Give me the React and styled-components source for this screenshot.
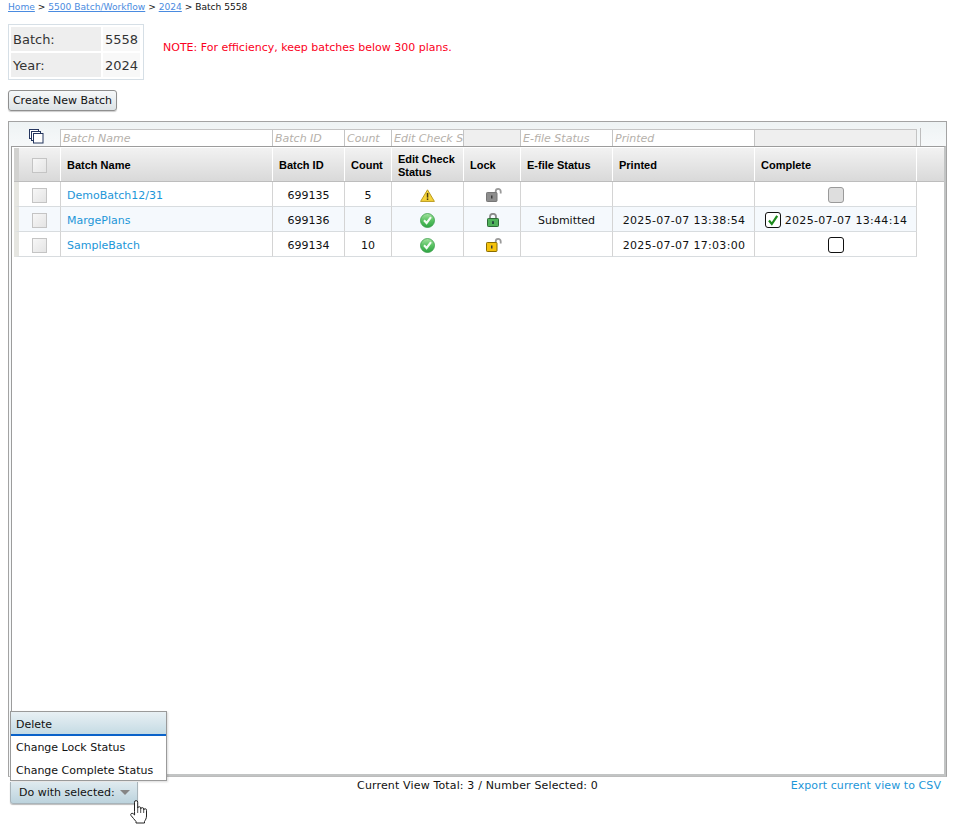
import React from 'react';
import styled, { createGlobalStyle } from 'styled-components';

const Global = createGlobalStyle`
  html, body { margin: 0; padding: 0; background: #fff; }
  body { font-family: "DejaVu Sans", Verdana, sans-serif; font-size: 11px; color: #222; }
`;

const COLS = '47px 212px 72px 47px 72px 57px 92px 142px 162px';

const Page = styled.div`
  width: 955px;
  height: 826px;
  padding: 0 8px;
  box-sizing: border-box;
  overflow: hidden;
`;

const Crumbs = styled.div`
  height: 24px;
  padding-top: 2px;
  box-sizing: border-box;
  font-size: 9.1px;
  line-height: 11px;
  color: #111;
  a { color: #4a8be0; text-decoration: underline; }
`;

const Top = styled.div`
  display: flex;
  align-items: flex-start;
`;

const InfoBox = styled.div`
  width: 136px;
  height: 56px;
  box-sizing: border-box;
  border: 1px solid #d6dfe6;
  padding: 2px;
  display: grid;
  grid-template-columns: 90px 37px;
  grid-auto-rows: 24px;
  column-gap: 2px;
  row-gap: 2px;
`;

const InfoCell = styled.div`
  background: ${p => (p.$label ? '#eeeeee' : '#f8f8f8')};
  box-sizing: border-box;
  padding: 1px 0 0 2px;
  font-size: 13px;
  line-height: 24px;
  color: #333;
  white-space: nowrap;
`;

const Note = styled.div`
  margin: 17px 0 0 19px;
  color: #fb0022;
  font-size: 11px;
  line-height: 14px;
`;

const CreateBtn = styled.button`
  display: block;
  margin: 10px 0 10px;
  width: 109px;
  height: 21px;
  padding: 0;
  border: 1px solid #8f8f8f;
  border-radius: 3px;
  background: linear-gradient(#f6f8f9, #dde3e6);
  box-shadow: 0 1px 1px #ccc;
  font-family: inherit;
  font-size: 11px;
  color: #111;
`;

const Panel = styled.div`
  height: 656px;
  box-sizing: border-box;
  border: 1px solid #a3a3a3;
  border-bottom: 1px solid #bcbcbc;
  background: linear-gradient(#eef3f4, #f7f9fa 26px, #f7f9fa);
  display: flex;
  flex-direction: column;
`;

const FilterRow = styled.div`
  height: 24px;
  display: grid;
  grid-template-columns: 51px 213px 72px 47px 72px 57px 92px 142px 162px 1fr;
  flex: none;
`;

const CopyCell = styled.div`
  display: flex;
  align-items: flex-start;
  justify-content: flex-end;
  padding: 7px 16px 0 0;
`;

const FilterCell = styled.div`
  box-sizing: border-box;
  height: 18px;
  margin-top: 7px;
  border: 1px solid #c4c4c4;
  border-left-width: ${p => (p.$first ? '1px' : '0')};
  background: ${p => (p.$off ? '#efefef' : '#fff')};
  color: #b5b0aa;
  font-style: italic;
  font-size: 11px;
  line-height: 17px;
  padding-left: 2px;
  overflow: hidden;
  white-space: nowrap;
`;

const FilterEnd = styled.div`
  height: 18px;
  margin: 6px 0 0 3px;
  border-left: 1px solid #bdbdbd;
`;

const Inner = styled.div`
  flex: 1;
  margin-left: 2px;
  border-style: solid;
  border-color: #9c9c9c #c2c4c4 #c2c4c4 #9c9c9c;
  border-width: 1px 2px 2px 1px;
  background: #fff;
  padding: 1px 0 0 2px;
`;

const HeadWrap = styled.div`
  background: linear-gradient(#f2f2f2, #d9d9d9);
  border-bottom: 1px solid #bdbdbd;
`;

const Grid = styled.div`
  display: grid;
  grid-template-columns: ${COLS};
  width: 903px;
`;

const Head = styled.div`
  height: 33px;
  box-sizing: border-box;
  border-right: 1px solid #fff;
  border-left: ${p => (p.$first ? '5px solid #d2d2d0' : '0')};
  padding: 1px 0 0 ${p => (p.$center ? 0 : '6px')};
  display: flex;
  align-items: center;
  justify-content: ${p => (p.$center ? 'center' : 'flex-start')};
  font-family: "Liberation Sans", Arial, sans-serif;
  font-weight: 700;
  font-size: 11px;
  line-height: 13px;
  color: #000;
`;

const TwoLines = styled.span`
  display: block;
  padding-top: 2px;
`;

const Row = styled(Grid)`
  background: ${p => (p.$alt ? '#f5f9fd' : '#fff')};
`;

const Cell = styled.div`
  height: 25px;
  box-sizing: border-box;
  border-right: 1px solid #d4d4d4;
  border-bottom: 1px solid #d8dcdf;
  border-left: ${p => (p.$first ? '5px solid #e6e6e1' : '0')};
  padding: ${p => (p.$align === 'left' ? '2px 0 0 6px' : '2px 0 0')};
  display: flex;
  align-items: center;
  justify-content: ${p => (p.$align === 'left' ? 'flex-start' : 'center')};
  color: #111;
  font-size: 11px;
  white-space: nowrap;
  a { color: #1c96d8; text-decoration: none; }
`;

const Check = styled.span`
  display: block;
  width: 13px;
  height: 13px;
  border: 1px solid #c4c4c4;
  background: linear-gradient(135deg, #f7f7f7, #e4e4e4);
`;

const Stamp = styled.span`
  letter-spacing: 0.3px;
  margin-left: 1px;
`;

const StampedBox = styled.span`
  display: flex;
  align-items: center;
  gap: 3px;
  margin-left: 1px;
`;

const RoundBox = styled.span`
  display: flex;
  align-items: center;
  justify-content: center;
  flex: none;
  width: 14px;
  height: 14px;
  border-radius: 3px;
  border: 1px solid ${p => (p.$off ? '#9a9a9a' : '#111')};
  background: ${p => (p.$off ? '#dedede' : '#fff')};
`;

const LockSlot = styled.span`
  display: flex;
  margin-left: ${p => p.$shift}px;
`;

const Footer = styled.div`
  position: relative;
  height: 49px;
  display: grid;
  grid-template-columns: minmax(0, 1fr) auto minmax(0, 1fr);
`;

const Selected = styled.button`
  position: absolute;
  left: 2px;
  top: 5px;
  width: 128px;
  height: 22px;
  padding: 0 0 0 8px;
  box-sizing: border-box;
  display: flex;
  align-items: center;
  gap: 5px;
  border: 1px solid #a8b4ba;
  border-top: 0;
  border-radius: 0 0 3px 3px;
  background: linear-gradient(#dfeaef, #bcd3dd);
  box-shadow: 0 1px 1px #bbb;
  font-family: inherit;
  font-size: 11px;
  color: #111;
`;

const Arrow = styled.span`
  width: 0;
  height: 0;
  border-left: 5px solid transparent;
  border-right: 5px solid transparent;
  border-top: 5px solid #858585;
`;

const Menu = styled.div`
  position: absolute;
  left: 2px;
  bottom: 45px;
  width: 157px;
  height: 70px;
  box-sizing: border-box;
  border: 1px solid #9a9a9a;
  background: #fff;
  box-shadow: 1px 1px 2px rgba(0, 0, 0, 0.15);
`;

const MenuItem = styled.div`
  height: 23px;
  box-sizing: border-box;
  padding-left: 5px;
  font-size: 11px;
  line-height: 23px;
  color: #111;
  ${p => p.$active && `
    height: 24px;
    line-height: 25px;
    background: linear-gradient(#e8f0f4, #c5dbe4);
    border-bottom: 2px solid #0a62c9;
  `}
`;

const Total = styled.div`
  grid-column: 2;
  margin-top: 2px;
  white-space: nowrap;
  letter-spacing: 0.15px;
  font-size: 11px;
  line-height: 14px;
  color: #111;
`;

const Export = styled.a`
  grid-column: 3;
  margin-top: 2px;
  padding-right: 6px;
  text-align: right;
  font-size: 11px;
  line-height: 14px;
  letter-spacing: 0.08px;
  color: #1c96d8;
  text-decoration: none;
`;

const Pointer = styled.span`
  position: absolute;
  left: 122px;
  top: 23px;
  display: block;
  line-height: 0;
`;

const CopyIcon = () => (
  <svg width="15" height="15" viewBox="0 0 15 15" fill="none" stroke="#25365f" strokeWidth="1">
    <rect x="0.5" y="0.5" width="9" height="9" fill="#fff" />
    <rect x="2.5" y="2.5" width="9" height="9" fill="#fff" />
    <rect x="4.5" y="4.5" width="9.5" height="9.5" fill="#fff" />
  </svg>
);

const WarnIcon = () => (
  <svg width="15" height="13" viewBox="0 0 15 13">
    <path d="M7.5 0.8 L14.4 12.4 H0.6 Z" fill="#f6d43a" stroke="#b99a1f" strokeWidth="1" strokeLinejoin="round" />
    <rect x="6.8" y="4" width="1.5" height="4.6" fill="#4a3d10" />
    <rect x="6.8" y="9.4" width="1.5" height="1.6" fill="#4a3d10" />
  </svg>
);

const OkIcon = () => (
  <svg width="15" height="15" viewBox="0 0 15 15">
    <defs>
      <linearGradient id="okg" x1="0" y1="0" x2="0" y2="1">
        <stop offset="0" stopColor="#a5e3a0" />
        <stop offset="0.5" stopColor="#59c262" />
        <stop offset="1" stopColor="#2fa543" />
      </linearGradient>
    </defs>
    <circle cx="7.5" cy="7.5" r="7" fill="url(#okg)" stroke="#3a9d4a" strokeWidth="0.8" />
    <path d="M4 7.2 L6.6 10 L11 4.2" fill="none" stroke="#f4fbf4" strokeWidth="2.1" />
  </svg>
);

const LockOpen = ({ fill, edge }) => (
  <svg width="16" height="14" viewBox="0 0 16 14">
    <path d="M9.7 5 V3.4 a2.5 2.5 0 0 1 5 0 V5.5" fill="none" stroke="#9a9a9a" strokeWidth="1.8" />
    <rect x="0.5" y="4.5" width="10.5" height="9" rx="0.8" fill={fill} stroke={edge} />
    <rect x="5" y="7.5" width="1.5" height="3" fill="#3a3a3a" />
  </svg>
);

const LockShut = () => (
  <svg width="12" height="14" viewBox="0 0 12 14">
    <path d="M3 6.5 V3.8 a3 3 0 0 1 6 0 V6.5" fill="none" stroke="#8a8a8a" strokeWidth="1.8" />
    <rect x="0.5" y="5.5" width="11" height="8" rx="0.8" fill="#4fb25a" stroke="#2d6b36" />
    <rect x="5.3" y="8.2" width="1.4" height="2.8" fill="#123" />
  </svg>
);

const GreenTick = () => (
  <svg width="12" height="12" viewBox="0 0 12 12">
    <path d="M2 6.5 L4.8 10 L10.2 1.8" fill="none" stroke="#1c8a1c" strokeWidth="2.2" />
  </svg>
);

const HandCursor = () => (
  <svg width="18" height="24" viewBox="0 0 18 24">
    <path
      d="M4.5 11.5 V2.2 a1.6 1.6 0 0 1 3.2 0 V8 a1.5 1.5 0 0 1 3 .5 V9 a1.5 1.5 0 0 1 3 .3 V10 a1.4 1.4 0 0 1 2.8 .3 V16 c0 2.5 -1.2 4 -2 5.5 V23 H6 V21.5 C4.5 19.5 2.5 17.5 1 15.5 c-1 -1.5 .8 -3 2.2 -1.8 L4.6 15 Z"
      fill="#fff"
      stroke="#222"
      strokeWidth="1"
      strokeLinejoin="round"
    />
    <path d="M7.7 8 V13 M10.7 9 V13 M13.7 10 V13" fill="none" stroke="#222" strokeWidth="0.8" />
  </svg>
);

const headers = [
  { key: 'check', label: <Check />, center: true, first: true },
  { key: 'name', label: 'Batch Name' },
  { key: 'id', label: 'Batch ID' },
  { key: 'count', label: 'Count' },
  { key: 'edit', label: <TwoLines>Edit Check<br />Status</TwoLines> },
  { key: 'lock', label: 'Lock' },
  { key: 'efile', label: 'E-file Status' },
  { key: 'printed', label: 'Printed' },
  { key: 'complete', label: 'Complete' },
];

const filters = [
  { text: 'Batch Name', first: true },
  { text: 'Batch ID' },
  { text: 'Count' },
  { text: 'Edit Check S' },
  { text: '', off: true },
  { text: 'E-file Status' },
  { text: 'Printed' },
  { text: '', off: true },
];

const rows = [
  {
    name: 'DemoBatch12/31', id: '699135', count: '5', edit: <WarnIcon />,
    lock: <LockSlot $shift={3}><LockOpen fill="#8d8d8d" edge="#777" /></LockSlot>, efile: '', printed: '',
    complete: <RoundBox $off />,
  },
  {
    name: 'MargePlans', id: '699136', count: '8', edit: <OkIcon />,
    lock: <LockSlot $shift={2}><LockShut /></LockSlot>, efile: 'Submitted', printed: '2025-07-07 13:38:54',
    complete: <StampedBox><RoundBox><GreenTick /></RoundBox><Stamp>2025-07-07 13:44:14</Stamp></StampedBox>, alt: true,
  },
  {
    name: 'SampleBatch', id: '699134', count: '10', edit: <OkIcon />,
    lock: <LockSlot $shift={3}><LockOpen fill="#f4c20d" edge="#8a6d00" /></LockSlot>, efile: '', printed: '2025-07-07 17:03:00',
    complete: <RoundBox />,
  },
];

export default function App() {
  return (
    <Page>
      <Global />
      <Crumbs>
        <a href="#home">Home</a> &gt; <a href="#batch">5500 Batch/Workflow</a> &gt; <a href="#year">2024</a> &gt; Batch 5558
      </Crumbs>
      <Top>
        <InfoBox>
          <InfoCell $label>Batch:</InfoCell>
          <InfoCell>5558</InfoCell>
          <InfoCell $label>Year:</InfoCell>
          <InfoCell>2024</InfoCell>
        </InfoBox>
        <Note>NOTE: For efficiency, keep batches below 300 plans.</Note>
      </Top>
      <CreateBtn>Create New Batch</CreateBtn>
      <Panel>
        <FilterRow>
          <CopyCell><CopyIcon /></CopyCell>
          {filters.map((f, i) => (
            <FilterCell key={i} $first={f.first} $off={f.off}>{f.text}</FilterCell>
          ))}
          <FilterEnd />
        </FilterRow>
        <Inner>
          <HeadWrap>
            <Grid>
              {headers.map(h => (
                <Head key={h.key} $center={h.center} $first={h.first}>{h.label}</Head>
              ))}
            </Grid>
          </HeadWrap>
          {rows.map(r => (
            <Row key={r.id} $alt={r.alt}>
              <Cell $first><Check /></Cell>
              <Cell $align="left"><a href="#plan">{r.name}</a></Cell>
              <Cell>{r.id}</Cell>
              <Cell>{r.count}</Cell>
              <Cell>{r.edit}</Cell>
              <Cell>{r.lock}</Cell>
              <Cell>{r.efile}</Cell>
              <Cell><Stamp>{r.printed}</Stamp></Cell>
              <Cell>{r.complete}</Cell>
            </Row>
          ))}
        </Inner>
      </Panel>
      <Footer>
        <Menu>
          <MenuItem $active>Delete</MenuItem>
          <MenuItem>Change Lock Status</MenuItem>
          <MenuItem>Change Complete Status</MenuItem>
        </Menu>
        <Selected>Do with selected: <Arrow /></Selected>
        <Pointer><HandCursor /></Pointer>
        <Total>Current View Total: 3 / Number Selected: 0</Total>
        <Export href="#csv">Export current view to CSV</Export>
      </Footer>
    </Page>
  );
}
